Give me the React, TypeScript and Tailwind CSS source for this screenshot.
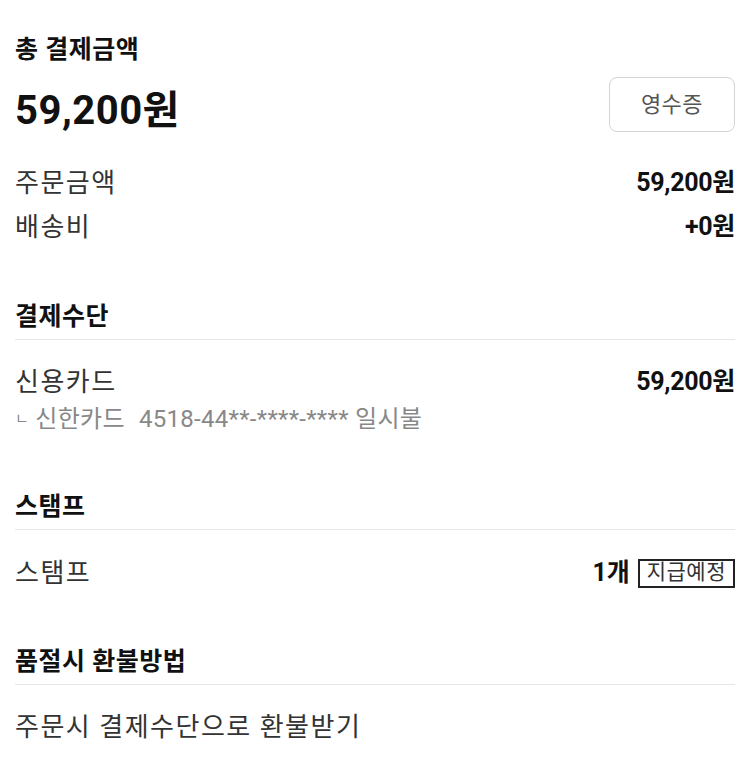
// App.tsx
// Order payment summary: total, breakdown, payment method, stamps and refund option.

const font = "font-['Roboto','Noto_Sans_CJK_KR',sans-serif]";

function SectionTitle({ children }: { children: React.ReactNode }) {
  return (
    <h2 className="text-[25px] font-bold leading-[34px] tracking-[0.5px] text-[#111] pb-[5px] border-b border-[#e6e6e6]">
      {children}
    </h2>
  );
}

function Row({ label, value }: { label: string; value: React.ReactNode }) {
  return (
    <div className="flex items-center justify-between h-[36px]">
      <span className="text-[26px] tracking-[1.5px] text-[#333]">{label}</span>
      <span className="text-[25px] font-bold tracking-[-0.3px] text-[#111]">{value}</span>
    </div>
  );
}

export default function App() {
  return (
    <div className={`w-[750px] min-h-[777px] bg-white px-[15px] pt-[33px] ${font}`}>
      {/* Total amount with the receipt button */}
      <section>
        <h1 className="text-[25px] font-bold leading-[34px] tracking-[0.5px] text-[#111]">총 결제금액</h1>
        <div className="mt-[10px] flex items-start justify-between">
          <div className="mt-[12px] text-[40px] font-bold leading-[44px] tracking-[0.5px] text-[#111]">
            59,200원
          </div>
          <button className="w-[126px] h-[55px] rounded-[8px] border border-[#d4d4d4] text-[22px] tracking-[0.5px] text-[#555]">
            영수증
          </button>
        </div>
        <div className="mt-[32px] flex flex-col gap-[8px]">
          <Row label="주문금액" value="59,200원" />
          <Row label="배송비" value="+0원" />
        </div>
      </section>

      {/* Payment method */}
      <section className="mt-[55px]">
        <SectionTitle>결제수단</SectionTitle>
        <div className="mt-[24px]">
          <Row label="신용카드" value="59,200원" />
          <div className="mt-[4px] text-[24px] leading-[30px] tracking-[0.3px] text-[#888]">
            <span className="text-[15px] align-top">ㄴ</span> 신한카드
            <span className="ml-[14px]">4518-44**-****-**** 일시불</span>
          </div>
        </div>
      </section>

      {/* Stamps */}
      <section className="mt-[56px]">
        <SectionTitle>스탬프</SectionTitle>
        <div className="mt-[25px] flex items-center justify-between h-[36px]">
          <span className="text-[26px] tracking-[1.5px] text-[#333]">스탬프</span>
          <div className="flex items-center gap-[8px]">
            <span className="text-[25px] font-bold text-[#111]">1개</span>
            <span className="h-[29px] px-[7px] flex items-center border-2 border-[#222] text-[21px] tracking-[0.5px] text-[#333]">
              지급예정
            </span>
          </div>
        </div>
      </section>

      {/* Refund option when sold out */}
      <section className="mt-[54px]">
        <SectionTitle>품절시 환불방법</SectionTitle>
        <div className="mt-[24px] h-[36px] flex items-center text-[26px] tracking-[1.5px] text-[#333]">
          주문시 결제수단으로 환불받기
        </div>
      </section>
    </div>
  );
}
